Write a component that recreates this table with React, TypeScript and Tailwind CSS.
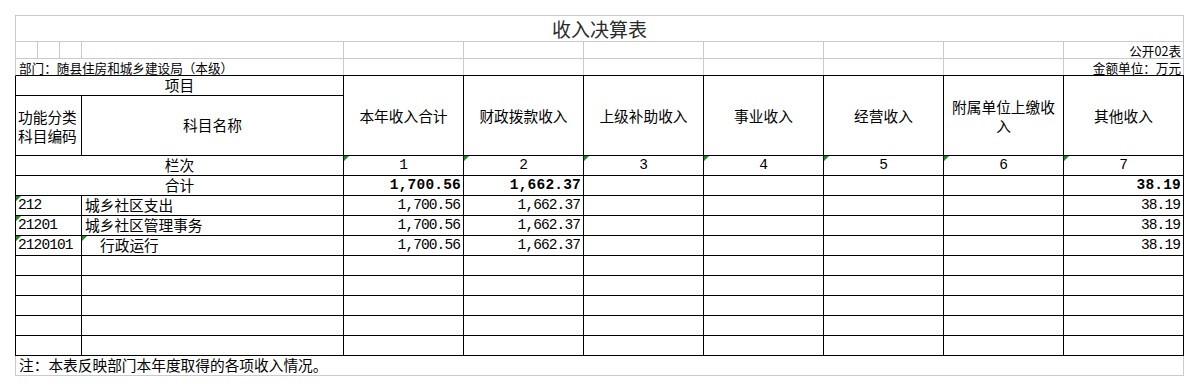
const cjk = "font-['Noto_Sans_CJK_SC',sans-serif]"
const mono = "font-['Liberation_Mono','Noto_Sans_CJK_SC',monospace]"
const gridGray = 'border-[#c6cbd6]'

const HEADERS = ['本年收入合计', '财政拨款收入', '上级补助收入', '事业收入', '经营收入', '附属单位上缴收入', '其他收入']

const TOTALS = ['1,700.56', '1,662.37', '', '', '', '', '38.19']

const ROWS = [
  { code: '212', name: '城乡社区支出', indent: false, vals: ['1,700.56', '1,662.37', '', '', '', '', '38.19'] },
  { code: '21201', name: '城乡社区管理事务', indent: false, vals: ['1,700.56', '1,662.37', '', '', '', '', '38.19'] },
  { code: '2120101', name: '行政运行', indent: true, vals: ['1,700.56', '1,662.37', '', '', '', '', '38.19'] },
  { code: '', name: '', indent: false, vals: ['', '', '', '', '', '', ''] },
  { code: '', name: '', indent: false, vals: ['', '', '', '', '', '', ''] },
  { code: '', name: '', indent: false, vals: ['', '', '', '', '', '', ''] },
  { code: '', name: '', indent: false, vals: ['', '', '', '', '', '', ''] },
  { code: '', name: '', indent: false, vals: ['', '', '', '', '', '', ''] },
]

function Flag() {
  return (
    <span className="absolute left-0 top-0 h-0 w-0 border-t-[5px] border-r-[5px] border-t-[#1e8a1e] border-r-transparent" />
  )
}

export default function App() {
  return (
    <div className="min-h-[391px] bg-white pl-[15px] pt-[15px] text-black">
      <div className="w-[1169px]">
        {/* title */}
        <div className={`flex h-[27px] items-center justify-center border ${gridGray}`}>
          <span className={`${cjk} text-[19px] leading-none text-[#2a2a2a]`}>收入决算表</span>
        </div>

        {/* 公开02表 */}
        <div className={`flex h-[17px] border-b border-l ${gridGray}`}>
          {[22, 22, 22, 262].map((w, i) => (
            <div key={i} style={{ width: w }} className={`h-full border-r ${gridGray}`} />
          ))}
          {[0, 1, 2, 3, 4, 5].map((i) => (
            <div key={i} className={`h-full w-[120px] border-r ${gridGray}`} />
          ))}
          <div className={`flex h-full w-[120px] items-end justify-end border-r pr-[2px] ${gridGray}`}>
            <span className={`${cjk} text-[12.6px] leading-[14px]`}>公开02表</span>
          </div>
        </div>

        {/* 部门 */}
        <div className={`flex h-[17px] border-b border-l border-b-black ${gridGray}`}>
          <div className={`flex h-full w-[328px] items-end border-r pl-[3px] ${gridGray}`}>
            <span className={`${cjk} text-[12.6px] leading-[14px]`}>部门：随县住房和城乡建设局（本级）</span>
          </div>
          {[0, 1, 2, 3, 4, 5].map((i) => (
            <div key={i} className={`h-full w-[120px] border-r ${gridGray}`} />
          ))}
          <div className={`flex h-full w-[120px] items-end justify-end border-r pr-[2px] ${gridGray}`}>
            <span className={`${cjk} text-[12.6px] leading-[14px]`}>金额单位：万元</span>
          </div>
        </div>

        {/* header */}
        <div className={`${cjk} flex h-[80px] border-l border-black text-[14.7px]`}>
          <div className="flex w-[328px] flex-col">
            <div className="flex h-[20px] items-center justify-center border-r border-b border-black leading-none">项目</div>
            <div className="flex h-[60px]">
              <div className="flex w-[66px] items-center border-r border-b border-black pl-[2px] leading-[19px]">
                功能分类
                <br />
                科目编码
              </div>
              <div className="flex w-[262px] items-center justify-center border-r border-b border-black">科目名称</div>
            </div>
          </div>
          {HEADERS.map((h) => (
            <div
              key={h}
              className="flex h-full w-[120px] items-center justify-center border-r border-b border-black px-[4px] text-center leading-[19px]"
            >
              {h}
            </div>
          ))}
        </div>

        {/* 栏次 */}
        <div className="flex h-[20px] border-l border-b border-black">
          <div className={`${cjk} flex w-[328px] items-center justify-center border-r border-black text-[14.7px]`}>栏次</div>
          {HEADERS.map((_, i) => (
            <div
              key={i}
              className={`${mono} relative flex w-[120px] items-center justify-center border-r border-black pt-[1px] text-[14.5px]`}
            >
              <Flag />
              {i + 1}
            </div>
          ))}
        </div>

        {/* 合计 */}
        <div className="flex h-[20px] border-l border-b border-black">
          <div className={`${cjk} flex w-[328px] items-center justify-center border-r border-black text-[14.7px]`}>合计</div>
          {TOTALS.map((v, i) => (
            <div
              key={i}
              className={`${mono} flex w-[120px] items-center justify-end border-r border-black pt-[1px] pr-[2px] text-[14.5px] font-bold tracking-[0.2px]`}
            >
              {v}
            </div>
          ))}
        </div>

        {/* data rows */}
        {ROWS.map((r, idx) => (
          <div key={idx} className="flex h-[20px] border-l border-b border-black">
            <div
              className={`${mono} relative flex w-[66px] items-center border-r border-black pt-[1px] pl-[2px] text-[14.5px] tracking-[-0.9px]`}
            >
              {r.code && <Flag />}
              {r.code}
            </div>
            <div
              className={`${cjk} relative flex w-[262px] items-center border-r border-black text-[14.7px] ${
                r.indent ? 'pl-[18px]' : 'pl-[3px]'
              }`}
            >
              {r.indent && <Flag />}
              {r.name}
            </div>
            {r.vals.map((v, i) => (
              <div
                key={i}
                className={`${mono} flex w-[120px] items-center justify-end border-r border-black pt-[1px] pr-[3px] text-[14.5px] tracking-[-0.9px]`}
              >
                {v}
              </div>
            ))}
          </div>
        ))}

        {/* note */}
        <div className={`flex h-[20px] items-center border-r border-b border-l pl-[3px] ${gridGray}`}>
          <span className={`${cjk} text-[14.7px]`}>注：本表反映部门本年度取得的各项收入情况。</span>
        </div>
      </div>
    </div>
  )
}
